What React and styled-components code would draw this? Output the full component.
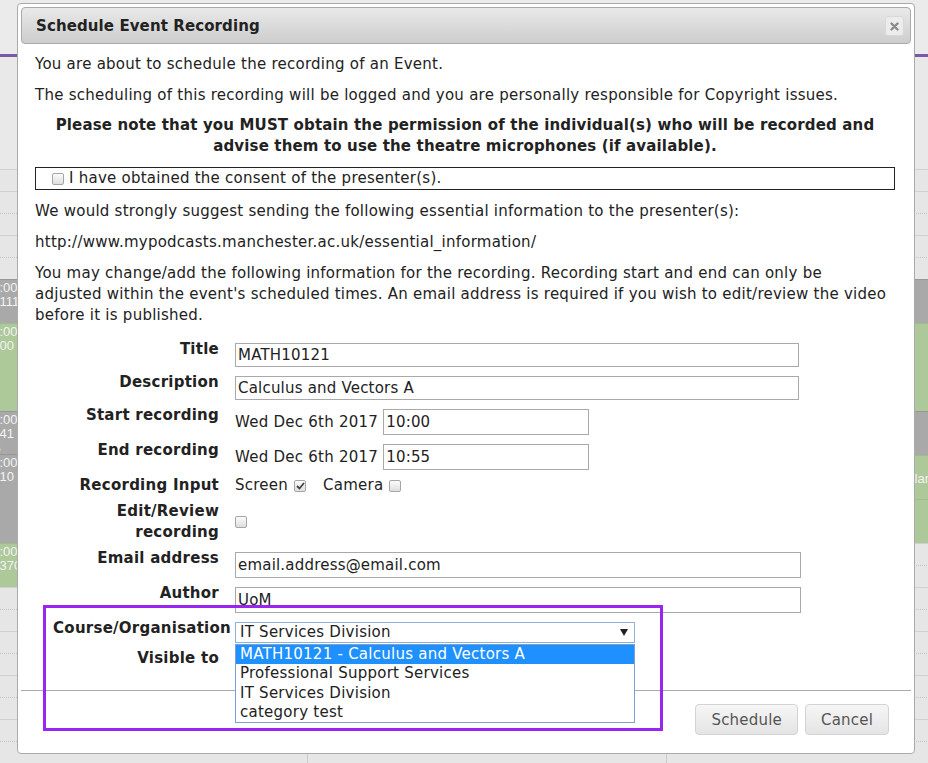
import React from 'react'
import styled, { createGlobalStyle } from 'styled-components'

const GlobalStyle = createGlobalStyle`
    body {
        margin: 0;
        background: #e6e6e6;
    }
`;

const Page = styled.div`
    position: relative;
    width: 928px;
    height: 763px;
    overflow: hidden;
    background: #e6e6e6;
    font-family: Verdana, "DejaVu Sans", sans-serif;
`;

/* calendar behind the dialog */
const Calendar = styled.div`
    display: flex;
    flex-direction: column;
    height: 100%;
`;

const CalTop = styled.div`
    height: 55px;
    background: #ebebeb;
`;

const TodayBar = styled.div`
    height: 3px;
    background: #7b59a6;
`;

const AllDay = styled.div`
    height: 114px;
    background: #e9e9e9;
`;

const Grid = styled.div`
    display: flex;
    flex: 1;
`;

const Column = styled.div`
    position: relative;
    width: ${p => p.$w}px;
    flex-shrink: 0;
    border-left: ${p => (p.$first ? 'none' : '1px solid #cbcbcb')};
`;

const Slot = styled.div`
    height: 22px;
    box-sizing: border-box;
    border-top: 1px ${p => (p.$dotted ? 'dotted #c3c3c3' : 'solid #d0d0d0')};
`;

const CalEvent = styled.div`
    position: absolute;
    top: ${p => p.$top}px;
    height: ${p => p.$h}px;
    left: ${p => p.$left}px;
    right: ${p => p.$right}px;
    box-sizing: border-box;
    padding: ${p => (p.$align === 'right' ? '16px 0 0' : '1px 2px 0')};
    background: ${p => (p.$green ? '#adc899' : '#a9a9a9')};
    border-top: 1px solid ${p => (p.$green ? '#9fbb8b' : '#979797')};
    color: #f3f3f3;
    font: 13px/14px "Liberation Sans", Arial, sans-serif;
    text-align: ${p => p.$align || 'left'};
    white-space: nowrap;
    overflow: hidden;
`;

/* dialog */
const Dialog = styled.div`
    position: absolute;
    left: 17px;
    top: 3px;
    width: 898px;
    height: 751px;
    box-sizing: border-box;
    padding: 3px;
    background: #fff;
    border: 1px solid #aaa;
    border-radius: 4px;
    display: flex;
    flex-direction: column;
    color: #222;
`;

const TitleBar = styled.div`
    height: 37px;
    box-sizing: border-box;
    padding: 1px 6px 0 14px;
    display: flex;
    align-items: center;
    justify-content: space-between;
    border: 1px solid #aaa;
    border-radius: 4px;
    background: linear-gradient(#e9e9e9, #cdcdcd);
    font-weight: bold;
    font-size: 15px;
    letter-spacing: 0.1px;
    color: #222;
`;

const CloseButton = styled.button`
    width: 19px;
    height: 20px;
    padding: 0;
    display: flex;
    align-items: center;
    justify-content: center;
    border: 1px solid #d8d8d8;
    border-radius: 3px;
    background: #ececec;
    cursor: pointer;
`;

const Content = styled.div`
    flex: 1;
    padding: 10px 16px 0 14px;
    font-size: 15px;
    line-height: 21px;
    letter-spacing: 0.25px;
    color: #222;
`;

const Para = styled.p`
    margin: 0 0 ${p => p.$space || 10}px;
    padding-right: ${p => (p.$narrow ? '8px' : '0')};
`;

const Note = styled.p`
    margin: 0 0 10px;
    font-weight: bold;
    letter-spacing: 0.15px;
    text-align: center;
`;

const ConsentBox = styled.label`
    display: flex;
    align-items: center;
    gap: 5px;
    margin-bottom: 11px;
    padding-left: 16px;
    border: 1px solid #222;
`;

const Check = styled.span`
    display: inline-flex;
    align-items: center;
    justify-content: center;
    width: 12px;
    height: 12px;
    box-sizing: border-box;
    border: 1px solid #a6a6a6;
    border-radius: 2px;
    background: linear-gradient(#fbfbfb, #dedede);
    vertical-align: -1px;
`;

const Form = styled.div`
    display: grid;
    grid-template-columns: 184px 1fr;
    column-gap: 16px;
    row-gap: 5px;
    padding-top: 3px;
`;

const Label = styled.div`
    font-weight: bold;
    letter-spacing: 0.25px;
    text-align: right;
    margin-right: ${p => (p.$wide ? '-12px' : '0')};
`;

const Value = styled.div`
    position: relative;
    display: flex;
    align-items: center;
    padding-top: ${p => (p.$flat ? '0' : '4px')};
    align-self: ${p => (p.$middle ? 'center' : 'start')};
`;

const TextInput = styled.input`
    width: ${p => p.$w}px;
    height: ${p => p.$h || 24}px;
    box-sizing: border-box;
    padding: 0 2px;
    border: 1px solid #a9a9a9;
    font: 15px Verdana, "DejaVu Sans", sans-serif;
    letter-spacing: 0.2px;
    color: #222;
    outline: none;
`;

const DateText = styled.span`
    margin-right: 5px;
`;

const CheckGroup = styled.span`
    display: inline-flex;
    align-items: center;
    gap: 6px;
    margin-right: ${p => p.$gap || 0}px;
`;

const SelectBox = styled.div`
    width: 400px;
    height: 21px;
    box-sizing: border-box;
    padding: 0 6px 0 4px;
    display: flex;
    align-items: center;
    justify-content: space-between;
    border: 1px solid #8fb1dc;
    font-size: 15px;
    line-height: 19px;
`;

const Arrow = styled.span`
    width: 0;
    height: 0;
    border-left: 4px solid transparent;
    border-right: 4px solid transparent;
    border-top: 7px solid #222;
`;

const OptionList = styled.ul`
    position: absolute;
    left: 0;
    top: 26px;
    width: 400px;
    box-sizing: border-box;
    margin: 0;
    padding: 0;
    list-style: none;
    background: #fff;
    border: 1px solid #7c9fd3;
    z-index: 2;
`;

const Option = styled.li`
    height: 19.25px;
    padding-left: 4px;
    font-size: 15px;
    line-height: 19px;
    background: ${p => (p.$active ? '#1e90ff' : 'transparent')};
    color: ${p => (p.$active ? '#fff' : '#222')};
`;

const ButtonPane = styled.div`
    height: 60px;
    box-sizing: border-box;
    display: flex;
    justify-content: flex-end;
    align-items: flex-start;
    gap: 7px;
    padding: 13px 22px 0 0;
    border-top: 1px solid #aaa;
`;

const Button = styled.button`
    height: 31px;
    padding: 0 ${p => p.$pad || 15}px;
    border: 1px solid #d3d3d3;
    border-radius: 4px;
    background: linear-gradient(#f6f6f6, #e4e4e4);
    font: 15px Verdana, "DejaVu Sans", sans-serif;
    letter-spacing: 0.2px;
    color: #555;
    cursor: pointer;
`;

const Highlight = styled.div`
    position: absolute;
    left: 43px;
    top: 605px;
    width: 620px;
    height: 126px;
    box-sizing: border-box;
    border: 3px solid #9a24f0;
    pointer-events: none;
`;

const leftEvents = [
    { top: 110, h: 44, lines: ['10:00', '10111'] },
    { top: 154, h: 88, lines: ['10:00', '1000'], green: true },
    { top: 242, h: 43, lines: ['10:00', '1041', '1B'] },
    { top: 285, h: 89, lines: ['10:00', '1010'] },
    { top: 374, h: 44, lines: ['10:00', '10370'], green: true },
];

const rightEvents = [
    { top: 110, h: 44 },
    { top: 154, h: 88, green: true },
    { top: 242, h: 44 },
    { top: 286, h: 44, green: true, text: 'Modular' },
    { top: 330, h: 44, green: true },
];

const slots = Array.from({ length: 27 }, (_, i) => i);

const Checkbox = ({ checked }) => (
    <Check>
        {checked && (
            <svg width="9" height="8" viewBox="0 0 9 8">
                <polyline points="1,4 3.5,6.5 8,1" fill="none" stroke="#444" strokeWidth="1.8" />
            </svg>
        )}
    </Check>
);

const CalendarBackground = () => (
    <Calendar>
        <CalTop />
        <TodayBar />
        <AllDay />
        <Grid>
            {[307, 358, 262].map((w, c) => (
                <Column key={c} $w={w} $first={c === 0}>
                    {slots.map(i => (
                        <Slot key={i} $dotted={i > 0 && i % 2 === 0} />
                    ))}
                    {c === 0 && leftEvents.map((e, i) => (
                        <CalEvent key={i} $top={e.top} $h={e.h} $left={-17} $right={80} $green={e.green}>
                            {e.lines.map(l => <div key={l}>{l}</div>)}
                        </CalEvent>
                    ))}
                    {c === 2 && rightEvents.map((e, i) => (
                        <CalEvent key={i} $top={e.top} $h={e.h} $left={20} $right={0} $green={e.green} $align="right">
                            {e.text}
                        </CalEvent>
                    ))}
                </Column>
            ))}
        </Grid>
    </Calendar>
);

const App = () => {
    return (
        <Page>
            <GlobalStyle />
            <CalendarBackground />
            <Dialog>
                <TitleBar>
                    Schedule Event Recording
                    <CloseButton aria-label="close">
                        <svg width="9" height="9" viewBox="0 0 9 9">
                            <path d="M1.5 1.5 L7.5 7.5 M7.5 1.5 L1.5 7.5" stroke="#8a8a8a" strokeWidth="2.4" strokeLinecap="round" />
                        </svg>
                    </CloseButton>
                </TitleBar>
                <Content>
                    <Para>You are about to schedule the recording of an Event.</Para>
                    <Para $space={9}>The scheduling of this recording will be logged and you are personally responsible for Copyright issues.</Para>
                    <Note>
                        Please note that you MUST obtain the permission of the individual(s) who will be recorded and
                        <br />advise them to use the theatre microphones (if available).
                    </Note>
                    <ConsentBox>
                        <Checkbox />
                        I have obtained the consent of the presenter(s).
                    </ConsentBox>
                    <Para>We would strongly suggest sending the following essential information to the presenter(s):</Para>
                    <Para>http://www.mypodcasts.manchester.ac.uk/essential_information/</Para>
                    <Para $narrow>
                        You may change/add the following information for the recording. Recording start and end can only be
                        adjusted within the event's scheduled times. An email address is required if you wish to edit/review the video
                        before it is published.
                    </Para>
                    <Form>
                        <Label>Title</Label>
                        <Value><TextInput $w={564} defaultValue="MATH10121" /></Value>

                        <Label>Description</Label>
                        <Value><TextInput $w={564} defaultValue="Calculus and Vectors A" /></Value>

                        <Label>Start recording</Label>
                        <Value>
                            <DateText>Wed Dec 6th 2017</DateText>
                            <TextInput $w={206} $h={26} defaultValue="10:00" />
                        </Value>

                        <Label>End recording</Label>
                        <Value>
                            <DateText>Wed Dec 6th 2017</DateText>
                            <TextInput $w={206} $h={26} defaultValue="10:55" />
                        </Value>

                        <Label>Recording Input</Label>
                        <Value $flat>
                            <CheckGroup $gap={17}>Screen <Checkbox checked /></CheckGroup>
                            <CheckGroup>Camera <Checkbox /></CheckGroup>
                        </Value>

                        <Label>Edit/Review<br />recording</Label>
                        <Value $flat $middle><Checkbox /></Value>

                        <Label>Email address</Label>
                        <Value><TextInput $w={566} $h={26} defaultValue="email.address@email.com" /></Value>

                        <Label>Author</Label>
                        <Value><TextInput $w={566} $h={26} defaultValue="UoM" /></Value>

                        <Label $wide>Course/Organisation</Label>
                        <Value>
                            <SelectBox>
                                IT Services Division
                                <Arrow />
                            </SelectBox>
                            <OptionList>
                                <Option $active>MATH10121 - Calculus and Vectors A</Option>
                                <Option>Professional Support Services</Option>
                                <Option>IT Services Division</Option>
                                <Option>category test</Option>
                            </OptionList>
                        </Value>

                        <Label>Visible to</Label>
                        <Value />
                    </Form>
                </Content>
                <ButtonPane>
                    <Button $pad={15}>Schedule</Button>
                    <Button $pad={15}>Cancel</Button>
                </ButtonPane>
            </Dialog>
            <Highlight />
        </Page>
    )
}

export default App
